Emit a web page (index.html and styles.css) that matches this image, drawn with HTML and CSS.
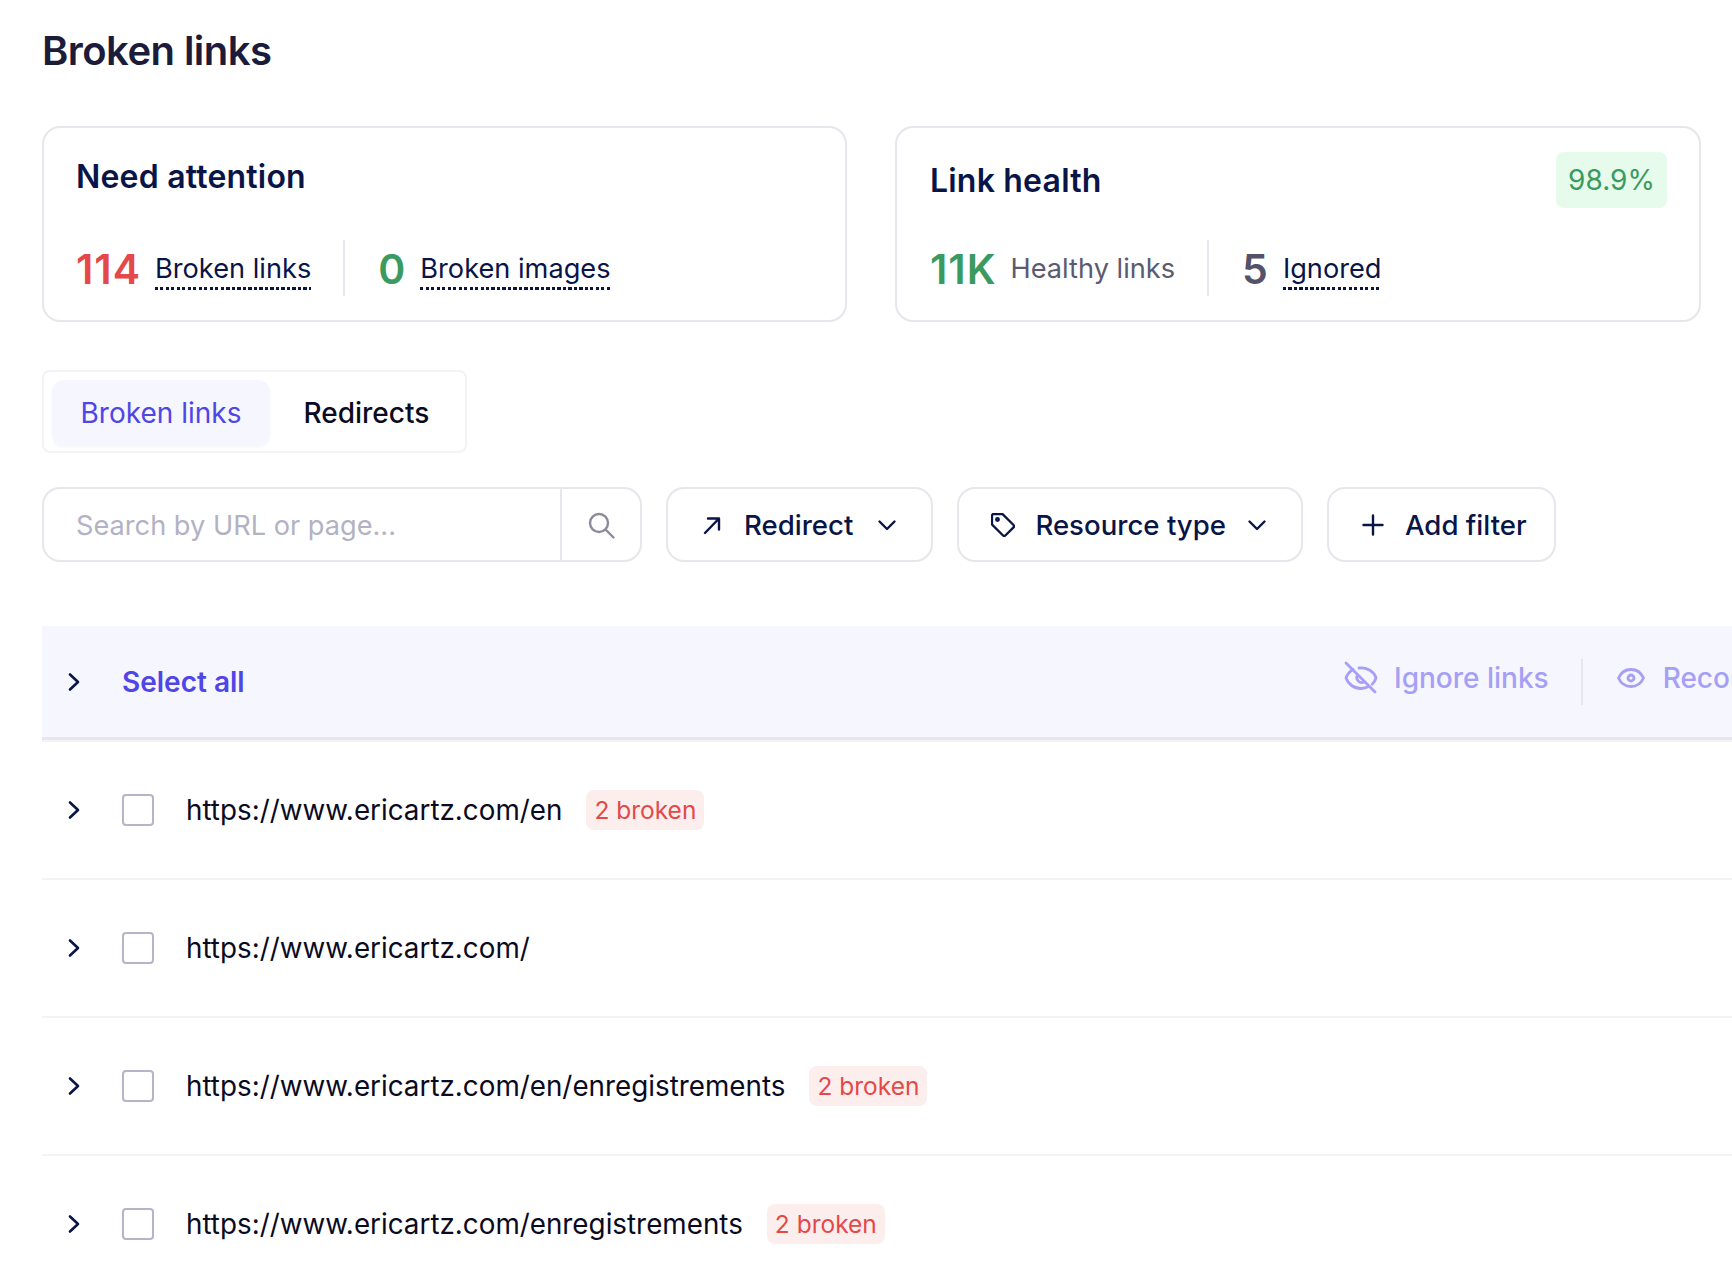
FILE: index.html
```html
<!DOCTYPE html>
<html lang="en">
<head>
    <meta charset="UTF-8">
    <meta name="viewport" content="width=device-width, initial-scale=1.0">
    <title>Broken links</title>
    <link rel="stylesheet" href="styles.css">
</head>
<body>
    <h1 class="page-title">Broken links</h1>

    <!-- Summary cards -->
    <div class="cards">
        <div class="card">
            <div class="card-header">
                <h2>Need attention</h2>
            </div>
            <div class="stats">
                <div class="stat">
                    <span class="stat-num red">114</span>
                    <span class="stat-label dotted">Broken links</span>
                </div>
                <div class="stat">
                    <span class="stat-num green">0</span>
                    <span class="stat-label dotted">Broken images</span>
                </div>
            </div>
        </div>
        <div class="card">
            <div class="card-header with-badge">
                <h2>Link health</h2>
                <span class="score">98.9%</span>
            </div>
            <div class="stats">
                <div class="stat">
                    <span class="stat-num green">11K</span>
                    <span class="stat-label muted">Healthy links</span>
                </div>
                <div class="stat">
                    <span class="stat-num grey">5</span>
                    <span class="stat-label dotted">Ignored</span>
                </div>
            </div>
        </div>
    </div>

    <!-- Tabs -->
    <div class="tabs">
        <div class="tab active">Broken links</div>
        <div class="tab">Redirects</div>
    </div>

    <!-- Filters -->
    <div class="filters">
        <div class="search">
            <div class="search-input">Search by URL or page...</div>
            <div class="search-btn">
                <svg width="32" height="32" viewBox="0 0 32 32" fill="none" stroke="#8b8b9c" stroke-width="2.4" stroke-linecap="round">
                    <circle cx="14" cy="14" r="9"/>
                    <path d="M21 21l7.5 7.5"/>
                </svg>
            </div>
        </div>
        <div class="filter-btn">
            <svg class="icon" width="24" height="24" viewBox="0 0 24 24" fill="none" stroke="#0a1547" stroke-width="2.4" stroke-linecap="round" stroke-linejoin="round">
                <path d="M5 20L18.500 6M8 5.500h11v11"/>
            </svg>
            <span>Redirect</span>
            <svg class="caret" width="24" height="24" viewBox="0 0 24 24" fill="none" stroke="#0a1547" stroke-width="2.4" stroke-linecap="round" stroke-linejoin="round">
                <path d="M4.500 8.500l7.500 7.500 7.500-7.500"/>
            </svg>
        </div>
        <div class="filter-btn resource">
            <svg class="icon" width="24" height="24" viewBox="3 3 24 24" fill="none" stroke="#0a1547" stroke-width="2.3" stroke-linecap="round" stroke-linejoin="round">
                <path d="M4 5.500A1.500 1.500 0 0 1 5.500 4h8.200a2 2 0 0 1 1.400.6l10.200 10.200a2 2 0 0 1 0 2.800l-7.700 7.700a2 2 0 0 1-2.800 0L4.600 15.100a2 2 0 0 1-.6-1.400z"/>
                <circle cx="9.500" cy="9.500" r="1.300"/>
            </svg>
            <span>Resource type</span>
            <svg class="caret" width="24" height="24" viewBox="0 0 24 24" fill="none" stroke="#0a1547" stroke-width="2.4" stroke-linecap="round" stroke-linejoin="round">
                <path d="M4.500 8.500l7.500 7.500 7.500-7.500"/>
            </svg>
        </div>
        <div class="filter-btn add-filter">
            <svg class="icon" width="24" height="24" viewBox="0 0 24 24" fill="none" stroke="#0a1547" stroke-width="2.4" stroke-linecap="round">
                <path d="M12 2.500v19M2.500 12h19"/>
            </svg>
            <span>Add filter</span>
        </div>
    </div>

    <!-- Links table -->
    <div class="table">
        <div class="bulk-bar">
            <svg class="chevron" width="14" height="20" viewBox="0 0 14 20" fill="none" stroke="#0a1547" stroke-width="2.600" stroke-linecap="round" stroke-linejoin="round">
                <path d="M3 2.500l8 7.500-8 7.500"/>
            </svg>
            <span class="select-all">Select all</span>
            <div class="bulk-actions">
                <div class="bulk-action">
                    <svg width="34" height="34" viewBox="0 0 34 34" fill="none" stroke="#a5a0f5" stroke-width="2.800" stroke-linecap="round" stroke-linejoin="round">
                        <path d="M2 2l29 29"/>
                        <path d="M9 8.500C5.500 10.500 3 14 2 17c2 6 8 10.500 15 10.500 3 0 5.500-.8 8-2.200"/>
                        <path d="M15 7c7-1 15 3 17 10-.8 2.500-2 4.500-3.800 6.300"/>
                        <path d="M13.500 14a5 5 0 0 0 6.500 7"/>
                    </svg>
                    <span>Ignore links</span>
                </div>
                <div class="bulk-action">
                    <svg width="28" height="20" viewBox="0 0 28 20" fill="none" stroke="#a5a0f5" stroke-width="2.800" stroke-linecap="round" stroke-linejoin="round">
                        <path d="M1.500 10C4 4.500 8.500 1.500 14 1.500S24 4.500 26.500 10C24 15.500 19.500 18.500 14 18.500S4 15.500 1.500 10z"/>
                        <circle cx="14" cy="10" r="3"/>
                    </svg>
                    <span>Reconsider links</span>
                </div>
            </div>
        </div>

        <div class="rows">
            <div class="row">
                <svg class="chevron" width="14" height="20" viewBox="0 0 14 20" fill="none" stroke="#0a1547" stroke-width="2.600" stroke-linecap="round" stroke-linejoin="round"><path d="M3 2.500l8 7.500-8 7.500"/></svg>
                <span class="checkbox"></span>
                <span class="url">https://www.ericartz.com/en</span>
                <span class="broken">2 broken</span>
            </div>
            <div class="row">
                <svg class="chevron" width="14" height="20" viewBox="0 0 14 20" fill="none" stroke="#0a1547" stroke-width="2.600" stroke-linecap="round" stroke-linejoin="round"><path d="M3 2.500l8 7.500-8 7.500"/></svg>
                <span class="checkbox"></span>
                <span class="url">https://www.ericartz.com/</span>
            </div>
            <div class="row">
                <svg class="chevron" width="14" height="20" viewBox="0 0 14 20" fill="none" stroke="#0a1547" stroke-width="2.600" stroke-linecap="round" stroke-linejoin="round"><path d="M3 2.500l8 7.500-8 7.500"/></svg>
                <span class="checkbox"></span>
                <span class="url">https://www.ericartz.com/en/enregistrements</span>
                <span class="broken">2 broken</span>
            </div>
            <div class="row">
                <svg class="chevron" width="14" height="20" viewBox="0 0 14 20" fill="none" stroke="#0a1547" stroke-width="2.600" stroke-linecap="round" stroke-linejoin="round"><path d="M3 2.500l8 7.500-8 7.500"/></svg>
                <span class="checkbox"></span>
                <span class="url">https://www.ericartz.com/enregistrements</span>
                <span class="broken">2 broken</span>
            </div>
        </div>
    </div>
</body>
</html>
```

FILE: styles.css
```css
/* General styles */
* {
    margin: 0;
    padding: 0;
    box-sizing: border-box;
}

html, body {
    height: 1288px;
    overflow: hidden;
}

body {
    font-family: Inter, "Liberation Sans", sans-serif;
    color: #0a1547;
    background: #fff;
    padding: 28px 0 0 42px;
    font-size: 28px;
}

.page-title {
    font-size: 40px;
    line-height: 46px;
    font-weight: 600;
    letter-spacing: -0.55px;
    color: #1d1b3a;
    margin-bottom: 52px;
}

/* Summary cards */
.cards {
    display: grid;
    grid-template-columns: 805px 806px;
    gap: 48px;
    margin-bottom: 48px;
}

.card {
    height: 196px;
    border: 2px solid #e6e6ec;
    border-radius: 18px;
    padding: 24px 32px 0;
}

.card + .card {
    padding-left: 33px;
}

.card-header {
    height: 48px;
    margin-bottom: 40px;
    display: flex;
    align-items: center;
}

.card-header.with-badge {
    height: 56px;
    justify-content: space-between;
    margin-bottom: 32px;
}

.card-header h2 {
    font-size: 32px;
    font-weight: 600;
    letter-spacing: 0.2px;
}

.score {
    background: #e7fbec;
    color: #3b9a5f;
    border-radius: 8px;
    width: 111px;
    height: 56px;
    display: flex;
    align-items: center;
    justify-content: center;
    font-size: 28px;
}

.stats {
    display: flex;
}

.stat {
    display: flex;
    align-items: center;
    gap: 14px;
    height: 56px;
    padding-right: 32px;
    margin-right: 33px;
    border-right: 2px solid #e6e6ec;
}

.stat:last-child {
    border-right: none;
    padding-right: 0;
    margin-right: 0;
}

.stat-num {
    font-size: 41px;
    font-weight: 600;
    letter-spacing: 1px;
    line-height: 1;
    padding-top: 2px;
}

.red { color: #e54848; }
.green { color: #3b9a5f; }
.grey { color: #55516b; }

.stat-label {
    font-size: 27.2px;
    line-height: 36px;
    padding: 5px 0 3px;
}

/* square dots, a dotted border draws them round */
.stat-label.dotted {
    background: repeating-linear-gradient(90deg, #0a1547 0 3px, transparent 3px 5.5px) left bottom / 100% 3px no-repeat;
}

.stat-label.muted {
    color: #5c5a72;
}

/* Tabs */
.tabs {
    display: inline-flex;
    border: 2px solid #f3f3f6;
    border-radius: 8px;
    padding: 8px 7px 5px 8px;
    height: 83px;
    gap: 5px;
    margin-bottom: 34px;
    vertical-align: top;
}

.tab {
    height: 66px;
    padding: 0 28.5px;
    display: flex;
    align-items: center;
    border-radius: 12px;
    color: #0b0b1f;
}

.tab:last-child {
    font-weight: 500;
}

.tab.active {
    background: #f6f6fe;
    color: #4f46e5;
    box-shadow: 0 2px 3px rgba(0, 0, 0, 0.03);
}

/* Filters */
.filters {
    display: flex;
    gap: 24px;
    height: 75px;
    margin-bottom: 64px;
    font-size: 27.6px;
    font-weight: 500;
}

.search {
    display: flex;
    width: 600px;
    border: 2px solid #e6e6ec;
    border-radius: 18px;
}

.search-input {
    flex: 1;
    padding: 2px 0 0 32px;
    display: flex;
    align-items: center;
    color: #b3b2c4;
    font-size: 27.2px;
    font-weight: 400;
}

.search-btn {
    width: 80px;
    border-left: 2px solid #e6e6ec;
    display: flex;
    align-items: center;
    justify-content: center;
}

.filter-btn {
    display: flex;
    align-items: center;
    gap: 20px;
    padding: 0 32px;
    border: 2px solid #e6e6ec;
    border-radius: 18px;
}

.filter-btn .caret {
    margin-left: 2px;
}

.filter-btn.resource .caret {
    margin-left: -1px;
}

.filter-btn.add-filter {
    padding-right: 27px;
}

/* Links table */
.table {
    width: 1690px;
}

.bulk-bar {
    height: 114px;
    background: #f6f6fe;
    border-bottom: 3px solid #e6e6ec;
    display: flex;
    align-items: center;
    padding-left: 25px;
    white-space: nowrap;
}

.select-all {
    margin-left: 41px;
    color: #4f46e5;
    font-weight: 600;
}

/* the last action runs off the right edge of the window */
.bulk-actions {
    margin-left: auto;
    display: flex;
    align-items: center;
    width: 476px;
    margin-right: -88px;
}

.bulk-action {
    display: flex;
    align-items: center;
    gap: 16px;
    color: #a5a0f5;
    font-weight: 500;
    height: 46px;
    padding-bottom: 8px;
    padding-right: 32px;
    margin-right: 34px;
    border-right: 2px solid #e6e6ec;
}

.bulk-action:last-child {
    gap: 18px;
    border-right: none;
    padding-right: 0;
    margin-right: 0;
}

.rows {
    border-top: 2px solid #f3f3f6;
}

.row {
    height: 138px;
    border-bottom: 2px solid #f3f3f6;
    display: flex;
    align-items: center;
    padding-left: 25px;
    white-space: nowrap;
    color: #0b0b1f;
    font-size: 27.8px;
}

.checkbox {
    width: 32px;
    height: 32px;
    border: 2px solid #b5b4c8;
    border-radius: 4px;
    margin-left: 41px;
    margin-right: 32px;
}

.broken {
    margin-left: 24px;
    height: 40px;
    padding: 0 8px;
    display: flex;
    align-items: center;
    background: #fdeeee;
    color: #e54848;
    font-size: 24.5px;
    border-radius: 8px;
}
```
